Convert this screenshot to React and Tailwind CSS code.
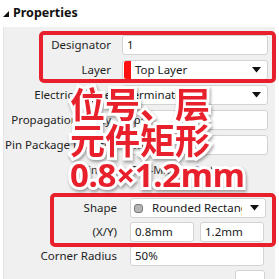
import React from "react";

const Arrow = () => (
  <svg width="9" height="6" viewBox="0 0 9 6" className="shrink-0">
    <polygon points="0,0 9,0 4.5,5.5" fill="#111" />
  </svg>
);

const Input = ({ children, className = "" }) => (
  <div
    className={
      "h-full bg-white border border-[#d3d3d3] rounded-[3px] flex items-center pl-[4px] text-[11.5px] text-[#1a1a1a] overflow-hidden whitespace-nowrap " +
      className
    }
  >
    {children}
  </div>
);

const Select = ({ children, className = "", swatch }) => (
  <div
    className={
      "h-full bg-white border border-[#d3d3d3] rounded-[3px] flex items-center text-[11.5px] text-[#1a1a1a] overflow-hidden whitespace-nowrap " +
      className
    }
  >
    {swatch}
    <div className="flex-1 overflow-hidden pl-[4px]">{children}</div>
    <div className="pr-[6px] pl-[8px] flex items-center">
      <Arrow />
    </div>
  </div>
);

const Row = ({ label, children, lw = "w-[107px]", gap = "gap-[11px]", iw = "w-[146px]" }) => (
  <div className={"flex items-center h-[20px] " + gap}>
    <div className={lw + " text-right text-[11.5px] text-[#1e1e1e] whitespace-nowrap shrink-0"}>{label}</div>
    <div className={iw + " h-full flex"}>{children}</div>
  </div>
);

export default function App() {
  return (
    <div
      className="relative w-[279px] h-[279px] bg-white overflow-hidden"
      style={{ fontFamily: '"Noto Sans", "Open Sans", sans-serif' }}
    >
      {/* header */}
      <div className="h-[27px] flex items-center pl-[3px] gap-[4px]">
        <svg width="6" height="6" viewBox="0 0 6 6">
          <polygon points="6,0 6,6 0,6" fill="#111" />
        </svg>
        <span className="text-[12.5px] font-bold text-[#111]">Properties</span>
      </div>

      {/* panel */}
      <div className="ml-[3px] w-[272px] h-[252px] bg-[#f0f0f0] border-l border-[#e4e4e4] flex flex-col pt-[8px]">
        <div className="flex flex-col gap-[5px]">
          <Row label="Designator">
            <Input className="w-full">1</Input>
          </Row>
          <Row label="Layer">
            <Select
              className="w-full"
              swatch={<div className="w-[7px] h-full bg-[#ff1010] rounded-l-[2px] ml-[1px]" />}
            >
              Top Layer
            </Select>
          </Row>
          <Row label="Electrical Type">
            <Select className="w-full">Terminator</Select>
          </Row>
          <Row label="Propagation Delay">
            <Input className="w-full">0ps</Input>
          </Row>
          <Row label="Pin Package Length">
            <Input className="w-full">0mm</Input>
          </Row>
          <div className="h-[20px] flex items-center gap-[14px] text-[11px] text-[#333] pl-[78px] whitespace-nowrap overflow-hidden">
            <span>Simple</span>
            <span>Top-Middle-Bottom</span>
          </div>
        </div>

        <div className="mt-[10px] ml-[5px] mr-[8px] h-px bg-[#a8a8a8]" />

        <div className="flex flex-col gap-[4px] mt-[8px]">
          <Row label="Shape" lw="w-[113px]" gap="gap-[13px]" iw="w-[136px]">
            <Select
              className="w-full"
              swatch={
                <div className="ml-[3px] w-[9px] h-[9px] rounded-[3px] bg-[#b5b5b5] border border-[#7a7a7a] shrink-0" />
              }
            >
              <span className="pl-[5px]">Rounded Rectangle</span>
            </Select>
          </Row>
          <Row label="(X/Y)" lw="w-[113px]" gap="gap-[13px]" iw="w-[134px]">
            <div className="flex gap-[6px] w-full h-full">
              <Input className="w-[64px]">0.8mm</Input>
              <Input className="w-[64px]">1.2mm</Input>
            </div>
          </Row>
          <Row label="Corner Radius" lw="w-[113px]" gap="gap-[13px]" iw="w-[134px]">
            <Input className="w-full">50%</Input>
          </Row>
          <div className="flex h-[20px] justify-end pr-[10px]">
            <div className="w-[30px] h-full bg-white border border-[#d3d3d3] rounded-[3px]" />
          </div>
        </div>
      </div>

      {/* red highlight boxes */}
      <div className="absolute left-[39px] top-[31px] w-[237px] h-[52px] border-[4px] border-[#e8202b] rounded-[5px]" />
      <div className="absolute left-[50px] top-[193px] w-[226px] h-[54px] border-[4px] border-[#e8202b] rounded-[5px]" />

      {/* overlay caption */}
      <div className="absolute left-[70px] top-[85px] font-bold text-[#e8202b] whitespace-nowrap [-webkit-text-stroke:6px_#ffffff] [paint-order:stroke_fill] drop-shadow-[1px_2px_1.5px_rgba(0,0,0,0.35)]">
        <div
          className="text-[35px] leading-[36px]"
          style={{ fontFamily: '"Noto Sans CJK SC", "Noto Sans", sans-serif' }}
        >
          <div>位号、层</div>
          <div>元件矩形</div>
        </div>
        <div
          className="text-[33px] leading-[36px] tracking-[-0.3px]"
          style={{ fontFamily: '"Noto Sans", "Noto Sans CJK SC", sans-serif' }}
        >
          0.8×1.2mm
        </div>
      </div>
    </div>
  );
}
